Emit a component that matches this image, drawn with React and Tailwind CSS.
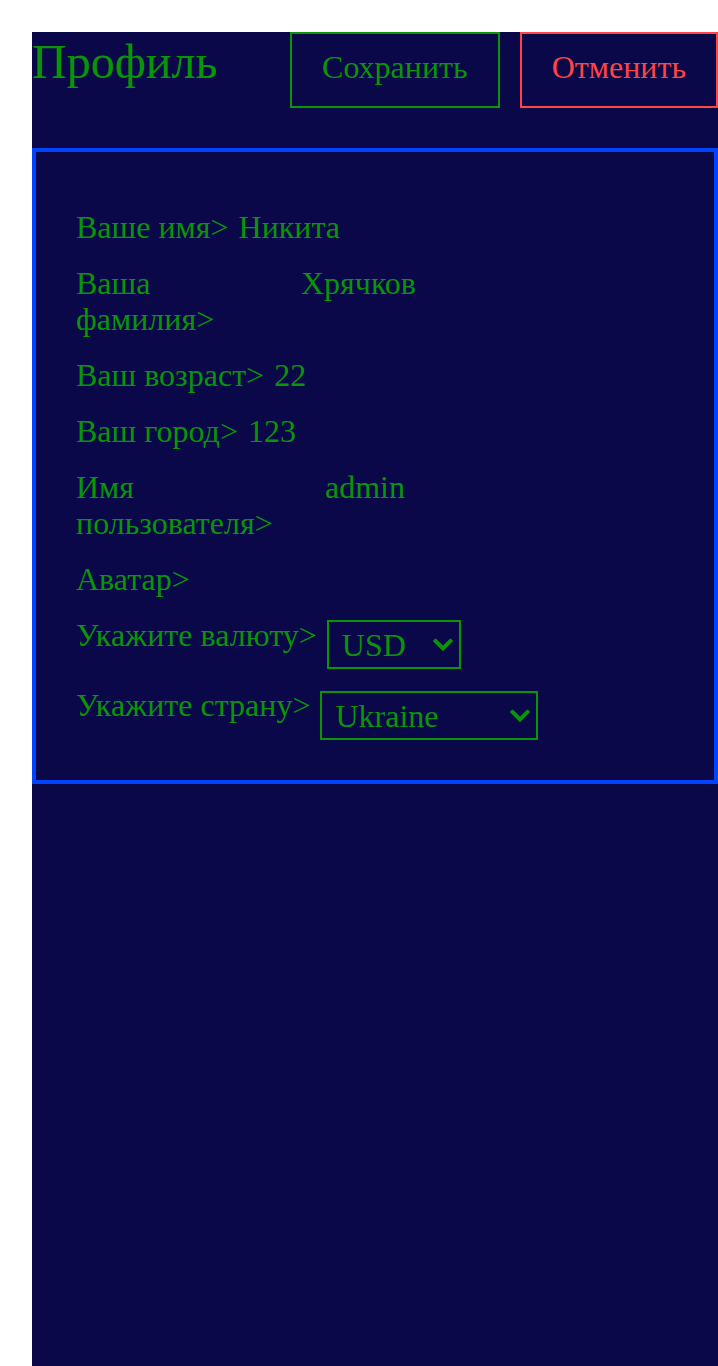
import React from "react";

const serif = { fontFamily: '"Liberation Serif", "Times New Roman", serif' };

function Chevron() {
  return (
    <svg
      className="pointer-events-none absolute right-[8px] top-1/2 -translate-y-1/2"
      width="20"
      height="13"
      viewBox="0 0 20 13"
      fill="none"
    >
      <path d="M2.5 2.5 L10 10 L17.5 2.5" stroke="#089508" strokeWidth="4" strokeLinecap="square" />
    </svg>
  );
}

function Select({ width, value, options }) {
  return (
    <div className={`relative shrink-0 ${width}`}>
      <select
        defaultValue={value}
        className="h-[49px] w-full appearance-none border-2 border-[#089508] bg-transparent pl-[13px] text-[32px] leading-[36px] text-[#089508] outline-none"
        style={serif}
      >
        {options.map((o) => (
          <option key={o} value={o} className="bg-[#0a0848]">
            {o}
          </option>
        ))}
      </select>
      <Chevron />
    </div>
  );
}

export default function App() {
  return (
    <div className="min-h-screen bg-white pl-8 pt-8" style={serif}>
      <div className="min-h-[1334px] w-[686px] bg-[#0a0848] text-[#089508]">
        <div className="flex items-start justify-between">
          <h1 className="pt-[2px] text-[48px] leading-[55px]">Профиль</h1>
          <div className="flex gap-5">
            <button className="border-2 border-[#089508] px-[30px] pb-[21px] pt-[15px] text-[32px] leading-[36px] text-[#089508]">
              Сохранить
            </button>
            <button className="border-2 border-[#ff4444] px-[30px] pb-[21px] pt-[15px] text-[32px] leading-[36px] text-[#ff4444]">
              Отменить
            </button>
          </div>
        </div>

        <div className="mt-10 border-4 border-[#0044ff] px-10 pb-10 pt-[57px] text-[32px] leading-[36px]">
          <div className="flex flex-col gap-5">
            <div className="flex gap-[10px]">
              <span>Ваше имя&gt;</span>
              <span>Никита</span>
            </div>
            <div className="flex gap-[10px]">
              <span className="w-[215px] shrink-0">Ваша фамилия&gt;</span>
              <span>Хрячков</span>
            </div>
            <div className="flex gap-[10px]">
              <span>Ваш возраст&gt;</span>
              <span>22</span>
            </div>
            <div className="flex gap-[10px]">
              <span>Ваш город&gt;</span>
              <span>123</span>
            </div>
            <div className="flex gap-[10px]">
              <span className="w-[239px] shrink-0">Имя пользователя&gt;</span>
              <span>admin</span>
            </div>
            <div className="flex gap-[10px]">
              <span>Аватар&gt;</span>
            </div>
            <div className="flex items-start gap-[10px]">
              <span>Укажите валюту&gt;</span>
              <div className="mt-[3px]">
                <Select width="w-[134px]" value="USD" options={["USD", "EUR", "UAH"]} />
              </div>
            </div>
            <div className="-mt-[2px] flex items-start gap-[10px]">
              <span>Укажите страну&gt;</span>
              <div className="mt-[4px]">
                <Select width="w-[218px]" value="Ukraine" options={["Ukraine", "Poland", "Germany"]} />
              </div>
            </div>
          </div>
        </div>
      </div>
    </div>
  );
}
